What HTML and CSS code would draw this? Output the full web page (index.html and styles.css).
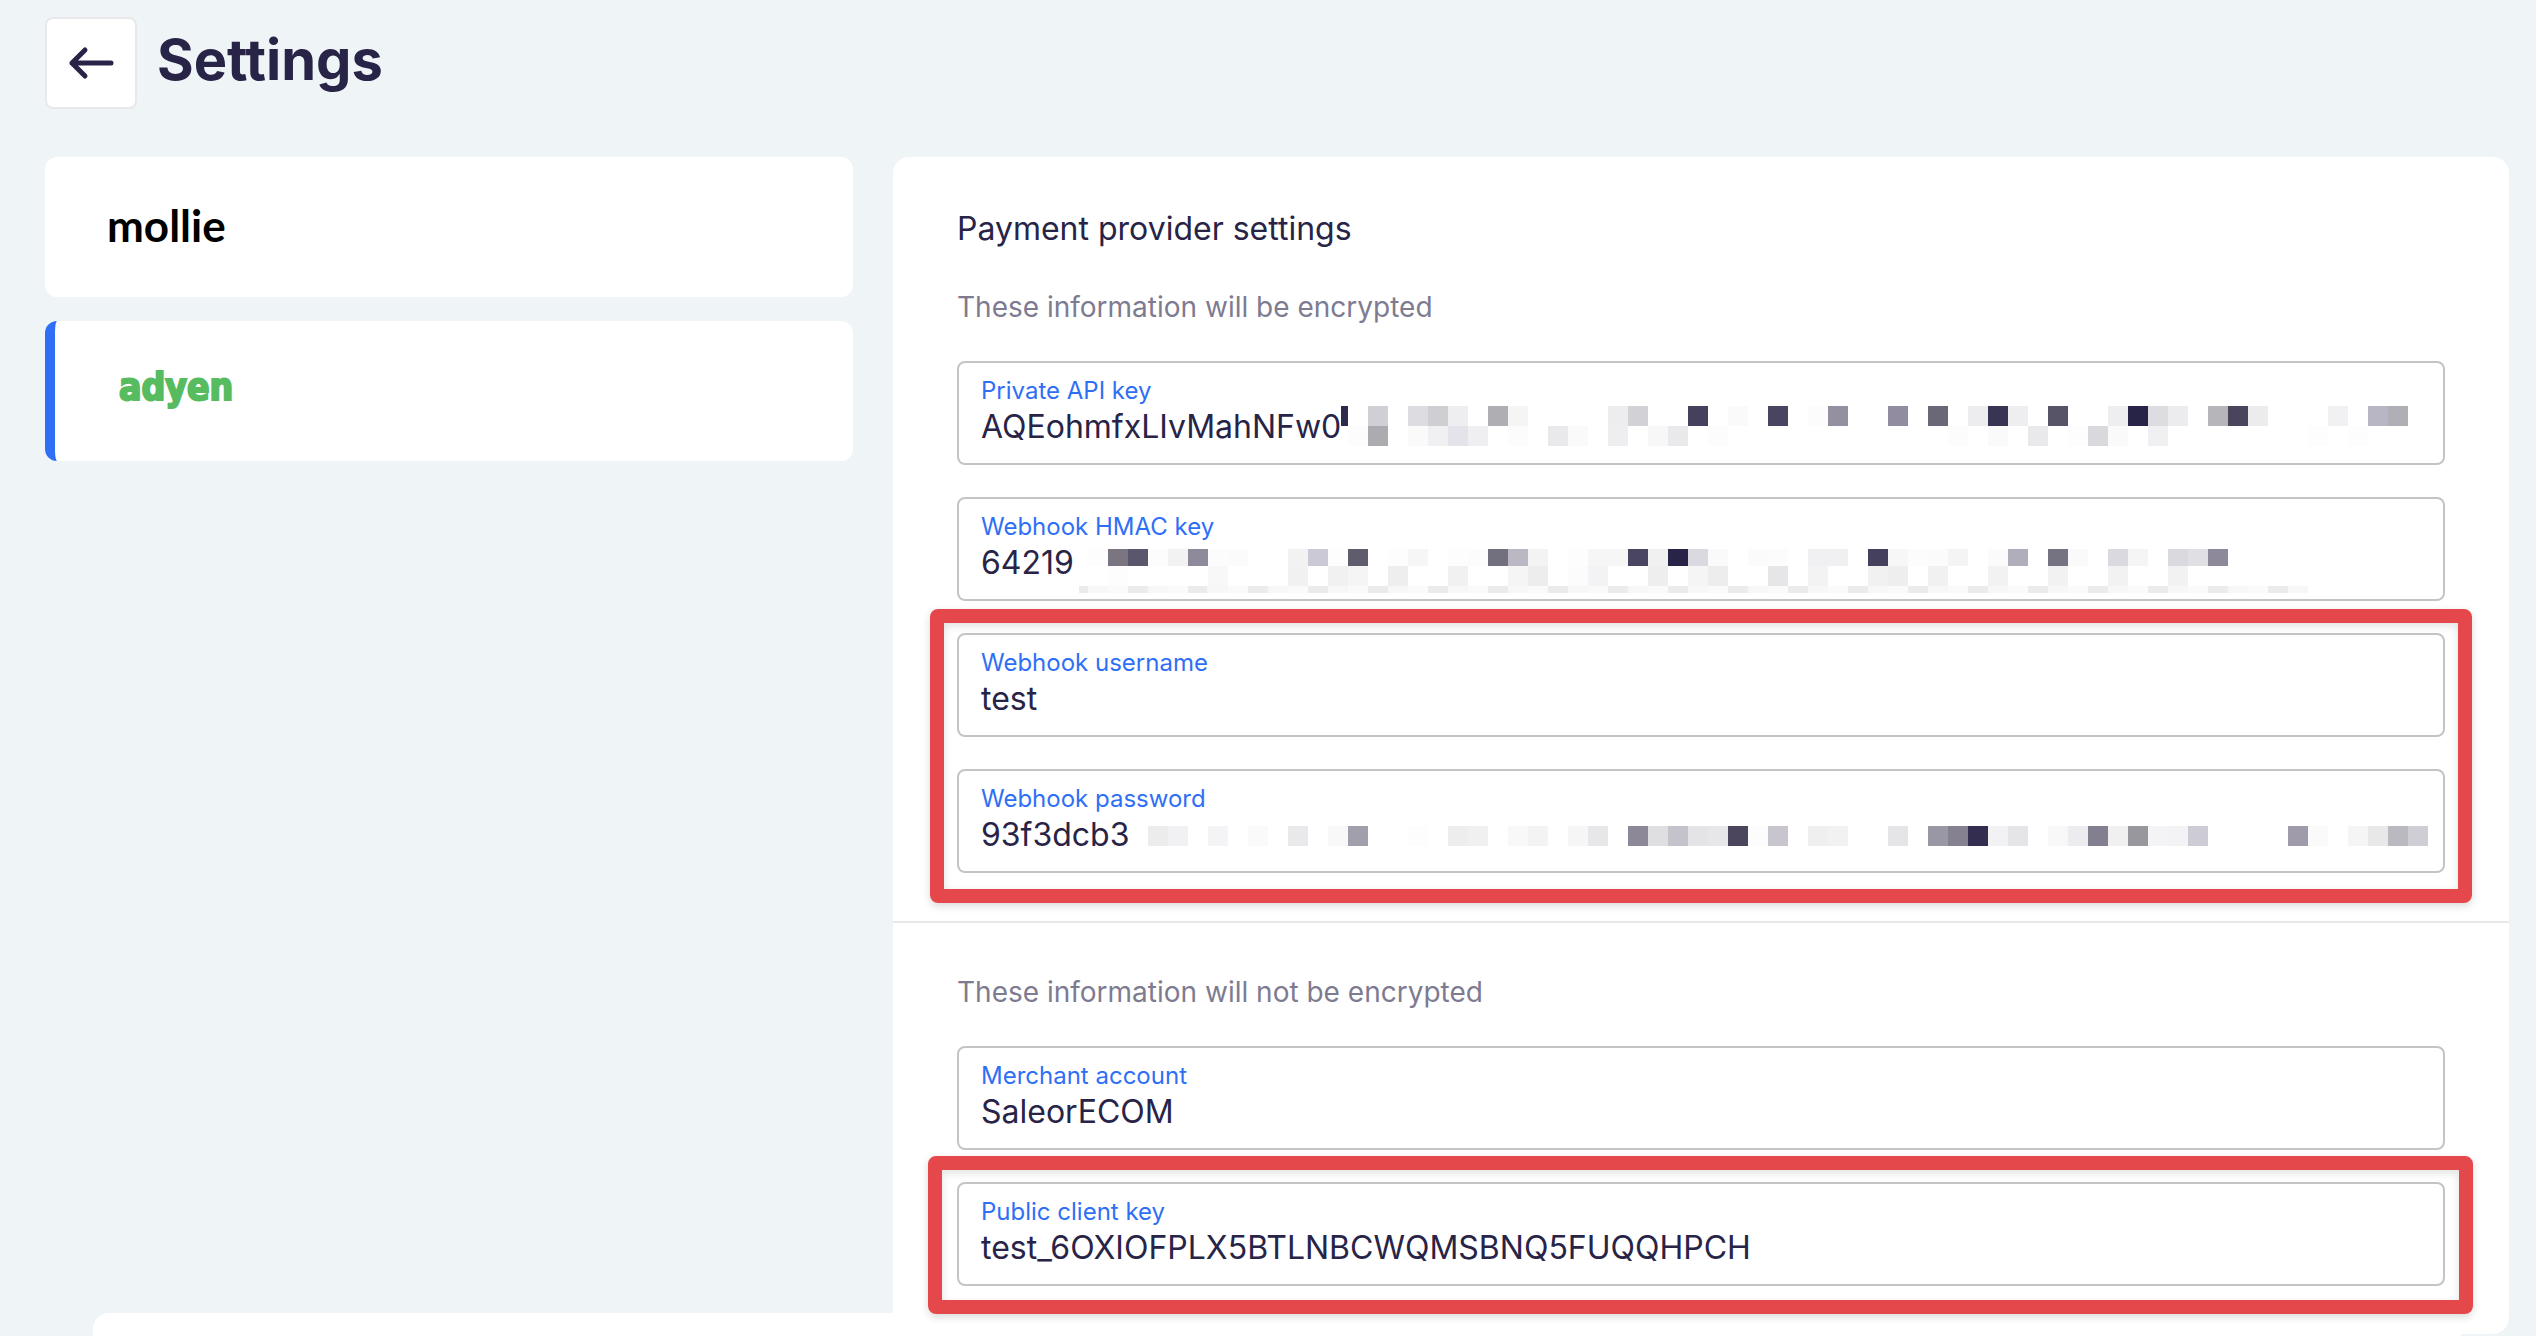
FILE: index.html
```html
<!DOCTYPE html>
<html lang="en">
<head>
<meta charset="utf-8">
<meta name="viewport" content="width=device-width, initial-scale=1">
<title>Settings</title>
<link rel="stylesheet" href="styles.css">
</head>
<body>
<header class="page-header">
  <button class="back" type="button" aria-label="Back">
    <svg width="48" height="36" viewBox="0 0 48 36" fill="none" stroke="currentColor" stroke-width="5" stroke-linecap="round" stroke-linejoin="round" aria-hidden="true"><path d="M44 18H5M18 5L5 18L18 31"/></svg>
  </button>
  <h1 class="page-title">Settings</h1>
</header>

<main class="layout">
  <nav class="providers" aria-label="Payment providers">
    <a class="provider" href="#mollie" aria-label="mollie">
      <svg class="logo logo-mollie" width="120" height="48" aria-hidden="true"><text x="-2" y="39">mollie</text></svg>
    </a>
    <a class="provider provider-active" href="#adyen" aria-label="adyen" aria-current="page">
      <svg class="logo logo-adyen" width="120" height="48" aria-hidden="true"><text x="0" y="33">adyen</text></svg>
    </a>
  </nav>

  <form class="panel">
    <section class="section">
      <h2 class="section-title">Payment provider settings</h2>
      <p class="section-note">These information will be encrypted</p>
      <div class="fields">
        <div class="field">
          <label class="field-label" for="api-key">Private API key</label>
          <input class="field-input" id="api-key" type="text" value="AQEohmfxLIvMahNFw0">
          <svg class="mosaic mosaic-api" viewBox="-0.35 0 53.35 2" aria-hidden="true">
            <path fill="#fff" d="M-.35 0H53V2H-.35z"/>
            <path fill="#2d294a" d="M-.35 0H0V1H-.35z"/>
            <g>
              <rect x="1" fill="#d0cfd5"/><rect x="3" fill="#dddce1"/><rect x="4" fill="#cfced3"/><rect x="5" fill="#eeeef1"/>
              <rect x="7" fill="#afaeb3"/><rect x="8" fill="#f5f5f5"/><rect x="13" fill="#ededf0"/><rect x="14" fill="#d2d1d6"/>
              <rect x="17" fill="#45405b"/><rect x="19" fill="#fafafa"/><rect x="21" fill="#49445f"/><rect x="23" fill="#fcfcfc"/>
              <rect x="24" fill="#9590a0"/><rect x="27" fill="#918ca0"/><rect x="29" fill="#6a6877"/><rect x="31" fill="#ededf0"/>
              <rect x="32" fill="#373454"/><rect x="33" fill="#eeeef1"/><rect x="35" fill="#575468"/><rect x="38" fill="#eeeef1"/>
              <rect x="39" fill="#282447"/><rect x="40" fill="#dddce1"/><rect x="41" fill="#ececef"/><rect x="43" fill="#b6b5ba"/>
              <rect x="44" fill="#4a455d"/><rect x="45" fill="#ececec"/><rect x="49" fill="#f1f1f3"/><rect x="51" fill="#b8b5c4"/>
              <rect x="52" fill="#b0afb5"/>
            </g>
            <g transform="translate(0 1)">
              <rect x="0" fill="#fcfcfc"/><rect x="1" fill="#acabb0"/><rect x="3" fill="#fafafa"/><rect x="4" fill="#f0f0f3"/>
              <rect x="5" fill="#e4e3e9"/><rect x="6" fill="#efeff1"/><rect x="8" fill="#fcfcfc"/><rect x="10" fill="#e9e9eb"/>
              <rect x="11" fill="#fafafa"/><rect x="13" fill="#eeeef0"/><rect x="15" fill="#f7f7f7"/><rect x="16" fill="#e9e9eb"/>
              <rect x="18" fill="#fcfcfc"/><rect x="30" fill="#fcfcfc"/><rect x="32" fill="#fafafa"/><rect x="34" fill="#e9e9eb"/>
              <rect x="36" fill="#fdfdfd"/><rect x="37" fill="#d9d8dc"/><rect x="38" fill="#fafafa"/><rect x="40" fill="#f0f0f2"/>
              <rect x="48" fill="#fdfdfd"/><rect x="50" fill="#fdfdfd"/>
            </g>
          </svg>
        </div>
        <div class="field">
          <label class="field-label" for="hmac-key">Webhook HMAC key</label>
          <input class="field-input" id="hmac-key" type="text" value="64219">
          <svg class="mosaic mosaic-hmac" viewBox="-0.45 0.15 61.45 2.2" aria-hidden="true">
            <defs>
              <pattern id="strip" width="3" height="1" patternUnits="userSpaceOnUse">
                <path fill="#f7f7f7" d="M0 0H1V1H0z"/><path fill="#fafafa" d="M1 0H2V1H1z"/><path fill="#ebebeb" d="M2 0H3V1H2z"/>
              </pattern>
            </defs>
            <g>
              <rect x="0" fill="#fdfdfd"/><rect x="1" fill="#7a7581"/><rect x="2" fill="#5a566b"/><rect x="3" fill="#fcfcfc"/>
              <rect x="4" fill="#f2f2f2"/><rect x="5" fill="#8f8a9b"/><rect x="6" fill="#fcfcfc"/><rect x="7" fill="#fbfbfb"/>
              <rect x="10" fill="#f2f2f2"/><rect x="11" fill="#cbc9d5"/><rect x="12" fill="#fdfdfd"/><rect x="13" fill="#5f5c6e"/>
              <rect x="15" fill="#fdfdfd"/><rect x="16" fill="#f6f6f6"/><rect x="18" fill="#fdfdfd"/><rect x="19" fill="#fcfcfc"/>
              <rect x="20" fill="#726f7f"/><rect x="21" fill="#bbb8c4"/><rect x="22" fill="#f3f3f3"/><rect x="24" fill="#fdfdfd"/>
              <rect x="25" fill="#f6f6f6"/><rect x="26" fill="#f6f6f6"/><rect x="27" fill="#4a4560"/><rect x="28" fill="#f0f0f0"/>
              <rect x="29" fill="#282447"/><rect x="30" fill="#dad9e0"/><rect x="31" fill="#fafafa"/><rect x="33" fill="#fbfbfb"/>
              <rect x="34" fill="#fcfcfc"/><rect x="36" fill="#f0f0f2"/><rect x="37" fill="#f0f0f2"/><rect x="39" fill="#46405f"/>
              <rect x="40" fill="#f7f7f7"/><rect x="41" fill="#fcfcfc"/><rect x="42" fill="#fbfbfb"/><rect x="43" fill="#f4f4f4"/>
              <rect x="45" fill="#fbfbfb"/><rect x="46" fill="#b0aeba"/><rect x="48" fill="#757281"/><rect x="49" fill="#fafafa"/>
              <rect x="51" fill="#dad9df"/><rect x="52" fill="#f5f5f5"/><rect x="54" fill="#dad9df"/><rect x="55" fill="#e0dfe4"/>
              <rect x="56" fill="#8d889a"/>
            </g>
            <g transform="translate(0 1)">
              <rect x="1" fill="#fdfdfd"/><rect x="6" fill="#f8f8f8"/><rect x="10" fill="#f1f1f1"/><rect x="12" fill="#f1f1f1"/>
              <rect x="13" fill="#f5f5f5"/><rect x="15" fill="#eeeeee"/><rect x="18" fill="#f1f1f1"/><rect x="21" fill="#f5f5f5"/>
              <rect x="22" fill="#ededed"/><rect x="24" fill="#fcfcfc"/><rect x="25" fill="#f3f3f6"/><rect x="28" fill="#eeeeee"/>
              <rect x="30" fill="#f5f5f5"/><rect x="31" fill="#ededed"/><rect x="34" fill="#e6e6e8"/><rect x="36" fill="#f3f3f3"/>
              <rect x="39" fill="#f1f1f1"/><rect x="40" fill="#eeeeee"/><rect x="42" fill="#f1f1f1"/><rect x="45" fill="#f2f2f2"/>
              <rect x="48" fill="#f2f2f2"/><rect x="51" fill="#f2f2f2"/><rect x="54" fill="#f2f2f2"/>
            </g>
            <path fill="url(#strip)" d="M-.45 2H61V2.350H-.45z"/>
          </svg>
        </div>
        <div class="highlight highlight-webhook">
          <div class="field">
            <label class="field-label" for="webhook-user">Webhook username</label>
            <input class="field-input" id="webhook-user" type="text" value="test">
          </div>
          <div class="field">
            <label class="field-label" for="webhook-pass">Webhook password</label>
            <input class="field-input" id="webhook-pass" type="text" value="93f3dcb3">
            <svg class="mosaic mosaic-pass" viewBox="0 0 64 1" aria-hidden="true">
              <rect x="0" fill="#ececec"/><rect x="1" fill="#f1f1f3"/><rect x="3" fill="#f4f4f6"/><rect x="5" fill="#fafafa"/>
              <rect x="7" fill="#e9e9eb"/><rect x="9" fill="#f8f8f8"/><rect x="10" fill="#a19fab"/><rect x="13" fill="#fdfdfd"/>
              <rect x="15" fill="#ededed"/><rect x="16" fill="#f0f0f0"/><rect x="18" fill="#f8f8f8"/><rect x="19" fill="#f3f3f3"/>
              <rect x="21" fill="#f6f6f6"/><rect x="22" fill="#e7e7ea"/><rect x="24" fill="#8c8898"/><rect x="25" fill="#dfdfe1"/>
              <rect x="26" fill="#c4c2ca"/><rect x="27" fill="#e4e4e7"/><rect x="28" fill="#e7e7ea"/><rect x="29" fill="#4b455d"/>
              <rect x="30" fill="#fcfcfc"/><rect x="31" fill="#c8c5cf"/><rect x="33" fill="#efefef"/><rect x="34" fill="#f2f2f2"/>
              <rect x="37" fill="#e5e5e7"/><rect x="39" fill="#9a97a5"/><rect x="40" fill="#858191"/><rect x="41" fill="#332e50"/>
              <rect x="42" fill="#f2f2f5"/><rect x="43" fill="#e5e5e7"/><rect x="45" fill="#f8f8f8"/><rect x="46" fill="#ecebf0"/>
              <rect x="47" fill="#837e90"/><rect x="48" fill="#f0f0f0"/><rect x="49" fill="#97979d"/><rect x="50" fill="#f4f4f6"/>
              <rect x="51" fill="#f3f3f5"/><rect x="52" fill="#cdcbd3"/><rect x="57" fill="#9f9bab"/><rect x="58" fill="#fafafa"/>
              <rect x="60" fill="#f5f5f5"/><rect x="61" fill="#e8e8e8"/><rect x="62" fill="#bab9bf"/><rect x="63" fill="#cfced4"/>
            </svg>
          </div>
        </div>
      </div>
    </section>

    <section class="section section-public">
      <p class="section-note">These information will not be encrypted</p>
      <div class="fields">
        <div class="field">
          <label class="field-label" for="merchant">Merchant account</label>
          <input class="field-input" id="merchant" type="text" value="SaleorECOM">
        </div>
        <div class="highlight highlight-client">
          <div class="field">
            <label class="field-label" for="client-key">Public client key</label>
            <input class="field-input" id="client-key" type="text" value="test_6OXIOFPLX5BTLNBCWQMSBNQ5FUQQHPCH">
          </div>
        </div>
      </div>
    </section>
  </form>
</main>
<div class="action-bar"></div>
</body>
</html>
```
FILE: styles.css
```css
* {
  box-sizing: border-box;
}

body {
  margin: 0;
  padding: 17px 27px 2px 45px;
  background: #eff4f7;
  color: #282447;
  font-family: Inter, "Liberation Sans", sans-serif;
}

h1,
h2,
p {
  margin: 0;
}

.page-header {
  display: flex;
  align-items: center;
  gap: 20px;
  margin-bottom: 48px;
}

.back {
  display: flex;
  align-items: center;
  justify-content: center;
  width: 92px;
  height: 92px;
  padding: 0;
  border: 2px solid #e8e8ea;
  border-radius: 8px;
  background: #fff;
  color: #282447;
}

.page-title {
  padding-bottom: 6px;
  font-size: 56px;
  font-weight: 700;
  line-height: 68px;
}

.layout {
  display: grid;
  grid-template-columns: 1fr 2fr;
  align-items: start;
  gap: 40px;
}

.providers {
  display: flex;
  flex-direction: column;
  gap: 24px;
}

.provider {
  display: flex;
  align-items: center;
  height: 140px;
  padding: 0 64px;
  border-radius: 12px;
  background: #fff;
  text-decoration: none;
}

.provider-active {
  border-left: 10px solid #2f6ff6;
}

.logo {
  overflow: visible;
}

.logo-mollie {
  fill: #000;
  font: 700 44px Lato, sans-serif;
}

.logo-adyen {
  fill: #57bb60;
  stroke: #57bb60;
  stroke-width: 2px;
  font: 700 37px "DejaVu Sans Condensed", "DejaVu Sans", sans-serif;
}

.panel {
  border-radius: 16px;
  background: #fff;
}

.section {
  padding: 48px 64px;
}

.section-public {
  padding-top: 47px;
  border-top: 2px solid #e8e8e8;
}

.section-title {
  margin-bottom: 32px;
  font-size: 32px;
  font-weight: 400;
  line-height: 48px;
}

.section-note {
  margin-bottom: 32px;
  color: #7e7b91;
  font-size: 28px;
  line-height: 44px;
}

.fields,
.highlight {
  display: flex;
  flex-direction: column;
  gap: 32px;
}

.field {
  position: relative;
  display: flex;
  flex-direction: column;
  height: 104px;
  padding: 14px 22px;
  border: 2px solid #c4c4c4;
  border-radius: 8px;
  background: #fff;
}

.field-label {
  color: #2f6ff6;
  font-size: 24px;
  line-height: 28px;
}

.field-input {
  width: 100%;
  height: 44px;
  padding: 0;
  border: 0;
  outline: 0;
  background: transparent;
  color: #282447;
  font: 400 32px/44px Inter, "Liberation Sans", sans-serif;
}

/* Pixelated cover over the secret part of a value; one unit is 20px */
.mosaic {
  position: absolute;
  shape-rendering: crispEdges;
}

.mosaic rect {
  width: 1px;
  height: 1px;
}

.mosaic-api {
  top: 43px;
  left: 382px;
  width: 1067px;
  height: 40px;
}

.mosaic-hmac {
  top: 50px;
  left: 120px;
  width: 1229px;
  height: 44px;
}

.mosaic-pass {
  top: 55px;
  left: 189px;
  width: 1280px;
  height: 20px;
}

/* Red annotation frame around a group of fields */
.highlight {
  position: relative;
}

.highlight::after {
  content: "";
  position: absolute;
  z-index: 2;
  border: 14px solid #e5484b;
  border-radius: 8px;
  box-shadow: 0 3px 8px rgba(0, 0, 0, 0.15), inset 0 3px 8px rgba(0, 0, 0, 0.12);
  pointer-events: none;
}

.highlight-webhook::after {
  inset: -24px -27px -30px;
}

.highlight-client::after {
  inset: -26px -28px -28px -29px;
}

.action-bar {
  position: fixed;
  right: 75px;
  bottom: 0;
  left: 93px;
  z-index: 1;
  height: 23px;
  border-radius: 16px 0 0;
  background: #fff;
}
```
